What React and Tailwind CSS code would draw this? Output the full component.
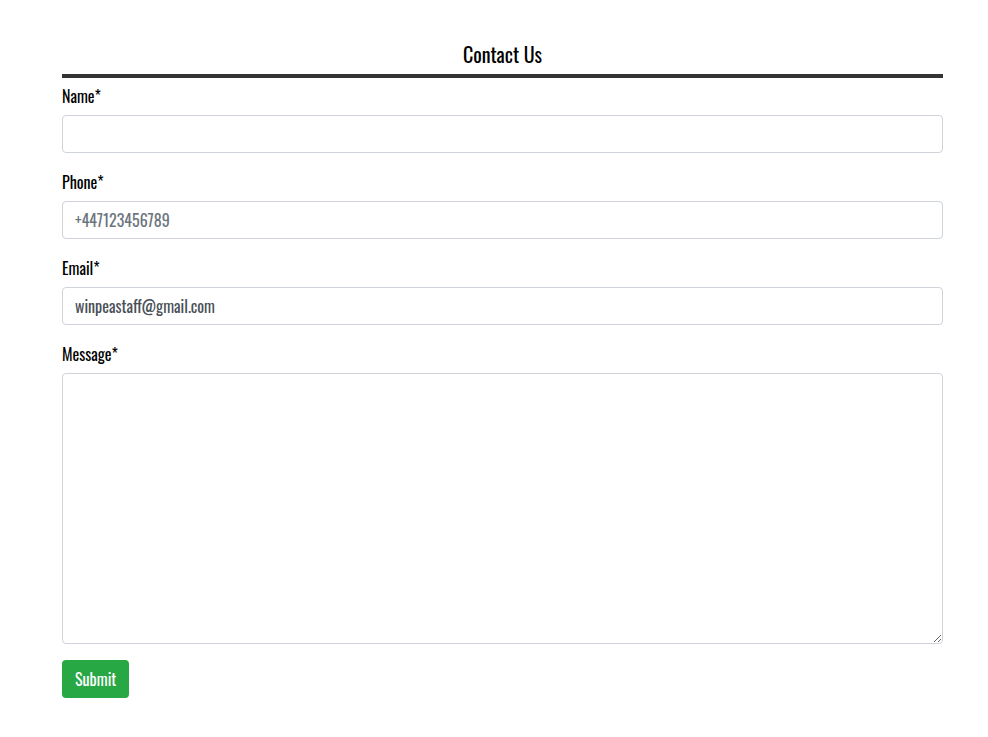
export default function App() {
  return (
    <div className="bg-white pt-[38px] pb-[40px] text-black [font-family:Oswald,'DejaVu_Sans_Condensed',sans-serif]">
      <div className="ml-[62px] w-[881px]">
        <h2 className="text-center text-[20px] leading-[32px] font-normal">Contact Us</h2>
        <div className="mt-[4px] h-[4px] bg-[#343434]"></div>
        <form className="pt-[6px]" onSubmit={(e) => e.preventDefault()}>
          <div className="mb-4">
            <label className="mb-[7px] block text-[16px] leading-[24px]">Name*</label>
            <input type="text" className="block h-[38px] w-full rounded-[4px] border border-[#ced4da] px-3 text-[16px] text-[#495057] outline-none" />
          </div>
          <div className="mb-4">
            <label className="mb-[7px] pt-px block text-[16px] leading-[24px]">Phone*</label>
            <input type="text" placeholder="+447123456789" className="block h-[38px] w-full rounded-[4px] border border-[#ced4da] px-3 text-[16px] text-[#495057] outline-none placeholder:text-[#6c757d]" />
          </div>
          <div className="mb-4">
            <label className="mb-[7px] pt-px block text-[16px] leading-[24px]">Email*</label>
            <input type="text" defaultValue="winpeastaff@gmail.com" className="block h-[38px] w-full rounded-[4px] border border-[#ced4da] px-3 text-[16px] text-[#495057] outline-none" />
          </div>
          <div className="mb-4">
            <label className="mb-[7px] pt-px block text-[16px] leading-[24px]">Message*</label>
            <textarea className="block h-[271px] w-full rounded-[4px] border border-[#ced4da] px-3 py-[6px] text-[16px] text-[#495057] outline-none"></textarea>
          </div>
          <button type="submit" className="block h-[38px] rounded-[4px] bg-[#28a745] px-[13px] text-[16px] text-white">Submit</button>
        </form>
      </div>
    </div>
  );
}
